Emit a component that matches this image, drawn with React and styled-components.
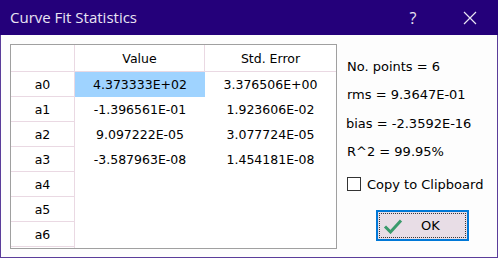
import React from "react";
import styled, { createGlobalStyle } from "styled-components";

const Global = createGlobalStyle`
  html, body { margin: 0; padding: 0; background: #ffffff; }
  body { font-family: "DejaVu Sans", Verdana, sans-serif; }
  * { box-sizing: border-box; }
`;

const Window = styled.div`
  width: 498px;
  height: 258px;
  display: flex;
  flex-direction: column;
  padding: 0 1px 1px 1px;
  background: #5b3d9a;
`;

const TitleBar = styled.div`
  height: 35px;
  margin: 0 -1px;
  background: #24007a;
  display: flex;
  align-items: center;
  padding-left: 10px;
  color: #e9e4f3;
  font-family: "Open Sans", "Noto Sans", sans-serif;
  font-size: 15px;
`;

const Title = styled.div`
  flex: 1;
  margin-top: -1px;
`;

const TitleButton = styled.div`
  width: ${(p) => p.$w}px;
  height: 35px;
  display: flex;
  align-items: center;
  justify-content: center;
`;

const Body = styled.div`
  flex: 1;
  background: #fdfdfd;
  display: flex;
  padding: 9px 0 0 9px;
`;

const Grid = styled.div`
  width: 327px;
  height: 205px;
  border: 1px solid #a0a0a0;
  background: #ffffff;
  overflow: hidden;
  display: grid;
  grid-template-columns: 64px 130px 131px;
  grid-auto-rows: 25px;
  grid-template-rows: 27px;
  font-size: 12.5px;
  color: #000;
`;

const Cell = styled.div`
  display: flex;
  align-items: center;
  justify-content: center;
  background: ${(p) => (p.$sel ? "#9fd3ff" : "transparent")};
  border-right: ${(p) => (p.$vr ? "1px solid #ead9e3" : "none")};
  border-bottom: ${(p) => (p.$hb ? "1px solid #ead9e3" : "none")};
  padding-top: ${(p) => (p.$head ? "1px" : "0")};
`;

const Side = styled.div`
  display: flex;
  flex-direction: column;
  padding: 8px 0 0 10px;
  font-size: 13px;
  color: #000;
`;

const Stat = styled.div`
  height: 28.5px;
  display: flex;
  align-items: center;
  margin-left: ${(p) => p.$ml || 0}px;
`;

const CheckRow = styled.label`
  display: flex;
  align-items: center;
  gap: 6px;
  height: 30px;
  margin-top: 3px;
`;

const Box = styled.span`
  width: 14px;
  height: 14px;
  border: 1px solid #333;
  background: #fff;
`;

const OkButton = styled.button`
  margin: 11px 0 0 29px;
  width: 93px;
  height: 31px;
  border: 2px solid #0078d7;
  background: #e8dde6;
  padding: 0;
  position: relative;
  display: flex;
  align-items: center;
  font-family: "DejaVu Sans", Verdana, sans-serif;
  font-size: 13px;
  color: #000;
  &::after {
    content: "";
    position: absolute;
    inset: 1px;
    border: 1px dotted #3a3a3a;
  }
`;

const OkIcon = styled.svg`
  margin-left: 5px;
`;

const OkLabel = styled.span`
  margin-left: 18px;
`;

const rows = [
  ["a0", "4.373333E+02", "3.376506E+00"],
  ["a1", "-1.396561E-01", "1.923606E-02"],
  ["a2", "9.097222E-05", "3.077724E-05"],
  ["a3", "-3.587963E-08", "1.454181E-08"],
  ["a4", "", ""],
  ["a5", "", ""],
  ["a6", "", ""],
  ["", "", ""],
];

export default function App() {
  return (
    <>
      <Global />
      <Window>
        <TitleBar>
          <Title>Curve Fit Statistics</Title>
          <TitleButton $w={58}>
            <span style={{ fontSize: 16 }}>?</span>
          </TitleButton>
          <TitleButton $w={56}>
            <svg width="14" height="14" viewBox="0 0 14 14">
              <path d="M1 1 L13 13 M13 1 L1 13" stroke="#e9e4f3" strokeWidth="1.2" />
            </svg>
          </TitleButton>
        </TitleBar>
        <Body>
          <Grid>
            <Cell $vr $hb $head />
            <Cell $vr $hb $head>Value</Cell>
            <Cell $hb $head>Std. Error</Cell>
            {rows.map((r, i) => (
              <React.Fragment key={i}>
                <Cell $vr $hb>{r[0]}</Cell>
                <Cell $sel={i === 0}>{r[1]}</Cell>
                <Cell>{r[2]}</Cell>
              </React.Fragment>
            ))}
          </Grid>
          <Side>
            <Stat>No. points = 6</Stat>
            <Stat>rms = 9.3647E-01</Stat>
            <Stat $ml={-1}>bias = -2.3592E-16</Stat>
            <Stat>R^2 = 99.95%</Stat>
            <CheckRow>
              <Box />
              Copy to Clipboard
            </CheckRow>
            <OkButton>
              <OkIcon width="20" height="16" viewBox="0 0 20 16">
                <path d="M2 8.5 L7.5 14 L18 2.5" fill="none" stroke="#3a9a6c" strokeWidth="3" />
              </OkIcon>
              <OkLabel>OK</OkLabel>
            </OkButton>
          </Side>
        </Body>
      </Window>
    </>
  );
}
